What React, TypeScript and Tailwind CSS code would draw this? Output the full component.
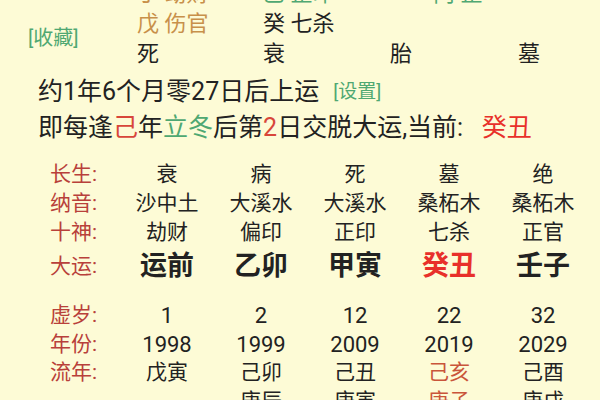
import React from "react";

const FONT = { fontFamily: 'Roboto, "Noto Sans CJK SC", "Noto Sans", sans-serif' };

type Cell = { text: string; color?: string };

const rows: { label: string; cells: Cell[]; big?: boolean }[] = [
  { label: "长生", cells: [{ text: "衰" }, { text: "病" }, { text: "死" }, { text: "墓" }, { text: "绝" }] },
  { label: "纳音", cells: [{ text: "沙中土" }, { text: "大溪水" }, { text: "大溪水" }, { text: "桑柘木" }, { text: "桑柘木" }] },
  { label: "十神", cells: [{ text: "劫财" }, { text: "偏印" }, { text: "正印" }, { text: "七杀" }, { text: "正官" }] },
  {
    label: "大运",
    big: true,
    cells: [{ text: "运前" }, { text: "乙卯" }, { text: "甲寅" }, { text: "癸丑", color: "text-[#e8302a]" }, { text: "壬子" }],
  },
];

const rows2: { label: string; cells: Cell[]; num?: boolean }[] = [
  { label: "虚岁", num: true, cells: [{ text: "1" }, { text: "2" }, { text: "12" }, { text: "22" }, { text: "32" }] },
  { label: "年份", num: true, cells: [{ text: "1998" }, { text: "1999" }, { text: "2009" }, { text: "2019" }, { text: "2029" }] },
  {
    label: "流年",
    cells: [{ text: "戊寅" }, { text: "己卯" }, { text: "己丑" }, { text: "己亥", color: "text-[#c9553a]" }, { text: "己酉" }],
  },
  {
    label: "",
    cells: [{ text: "" }, { text: "庚辰" }, { text: "庚寅" }, { text: "庚子", color: "text-[#c9553a]" }, { text: "庚戌" }],
  },
];

function TableRow({ label, cells, big, num, h }: { label: string; cells: Cell[]; big?: boolean; num?: boolean; h: string }) {
  const size = big ? "text-[27px] font-bold" : num ? "text-[22px]" : "text-[21px]";
  return (
    <div className={`grid grid-cols-[120px_repeat(5,94px)] items-center ${h}`}>
      <div className="pl-[50px] text-[21px] text-[#b8403a]">{label ? `${label}:` : ""}</div>
      {cells.map((c, i) => (
        <div key={i} className={`text-center ${size} ${c.color ?? "text-[#222]"}`}>
          {c.text}
        </div>
      ))}
    </div>
  );
}

export default function App() {
  return (
    <div className="w-[600px] h-[400px] overflow-hidden bg-[#fdfbd6] text-[#222]" style={FONT}>
      {/* 四柱下方 */}
      <div className="flex mt-[-22px]">
        <div className="w-[137px] flex flex-col pl-[28px]">
          <div className="h-[30px]" />
          <div className="flex-1 flex items-center">
            <span className="text-[20px] text-[#4fa872]">[收藏]</span>
          </div>
        </div>
        <div className="grid grid-cols-[126px_127px_128px_80px] auto-rows-[30px] items-center text-[22px]">
          <div className="text-[#c8904a]">丁 劫财</div>
          <div className="text-[#4fa872]">乙 正印</div>
          <div className="text-[#4fa872] pl-[43px]">丙 正</div>
          <div />
          <div className="text-[#c8904a]">戊 伤官</div>
          <div>癸 七杀</div>
          <div />
          <div />
          <div>死</div>
          <div>衰</div>
          <div>胎</div>
          <div>墓</div>
        </div>
      </div>

      {/* 起运 */}
      <div className="mt-[6px] pl-[38px] text-[25px]">
        <div className="h-[36px] flex items-center">
          约1年6个月零27日后上运
          <span className="ml-[14px] text-[19px] text-[#4fa872]">[设置]</span>
        </div>
        <div className="h-[36px] flex items-center whitespace-pre">
          即每逢<span className="text-[#d8463a]">己</span>年<span className="text-[#4fa872]">立冬</span>后第
          <span className="text-[#d8463a]">2</span>日交脱大运,当前:{"   "}
          <span className="text-[#e8302a]">癸丑</span>
        </div>
      </div>

      {/* 大运表 */}
      <div className="pt-[13px]">
        {rows.map((r) => (
          <TableRow key={r.label} label={r.label} cells={r.cells} big={r.big} h={r.big ? "h-[40px]" : "h-[29px]"} />
        ))}
        <div className="h-[13px]" />
        {rows2.map((r, i) => (
          <TableRow key={i} label={r.label} cells={r.cells} num={r.num} h="h-[29px]" />
        ))}
      </div>
    </div>
  );
}
